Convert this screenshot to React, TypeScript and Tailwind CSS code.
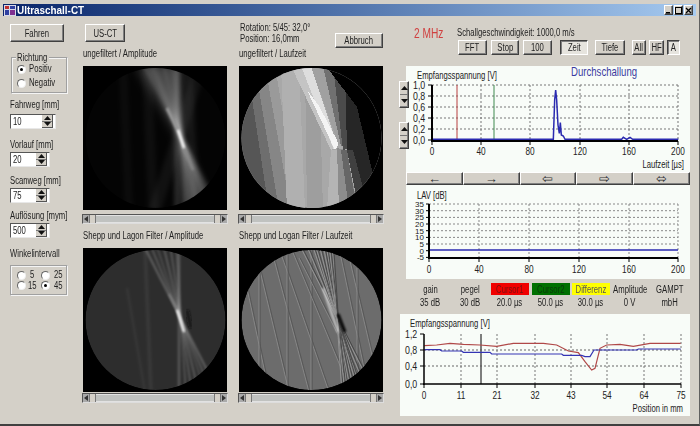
import React from "react";

const raised = "border border-t-white border-l-white border-r-[#404040] border-b-[#404040] shadow-[inset_-1px_-1px_0_#808080] bg-[#d4d0c8]";
const pressed = "border border-t-[#404040] border-l-[#404040] border-r-white border-b-white shadow-[inset_1px_1px_0_#808080] bg-[#e6e4de]";

const L = ({ children }: { children: React.ReactNode }) => <span className="inline-block whitespace-nowrap origin-left scale-x-[.77]">{children}</span>;
const C = ({ children }: { children: React.ReactNode }) => <span className="inline-block whitespace-nowrap origin-center scale-x-[.77]">{children}</span>;

function Btn({ w, h = 15, on, ml = 0, children }: { w: number; h?: number; on?: boolean; ml?: number; children: React.ReactNode }) {
  return (
    <div className={`${on ? pressed : raised} flex items-center justify-center shrink-0 text-[10px] text-[#222]`} style={{ width: w, height: h, marginLeft: ml }}>
      <C>{children}</C>
    </div>
  );
}

function Tri({ down }: { down?: boolean }) {
  return (
    <svg width="7" height="4" viewBox="0 0 7 4">
      <polygon points={down ? "0,0 7,0 3.5,4" : "0,4 7,4 3.5,0"} fill="#111" />
    </svg>
  );
}

function Spin({ value, w }: { value: string; w: number }) {
  return (
    <div className="h-[15px] flex items-center bg-white border border-t-[#555] border-l-[#555] border-r-[#e8e8e8] border-b-[#e8e8e8] pl-[2px]" style={{ width: w }}>
      <span className="flex-1 text-[10px] text-[#222]"><L>{value}</L></span>
      <div className="w-[11px] h-[13px] flex flex-col bg-[#d4d0c8] mr-[2px] border-r border-b border-[#555]">
        <div className="flex-1 flex items-center justify-center border-b border-[#777]"><Tri /></div>
        <div className="flex-1 flex items-center justify-center"><Tri down /></div>
      </div>
    </div>
  );
}

function Radio({ on }: { on?: boolean }) {
  return (
    <span className="w-[9px] h-[9px] rounded-full bg-white border border-t-[#666] border-l-[#666] border-r-[#eee] border-b-[#eee] flex items-center justify-center shrink-0">
      {on && <span className="w-[3px] h-[3px] rounded-full bg-black" />}
    </span>
  );
}

function Scroll() {
  return (
    <div className="w-[146px] -ml-[1px] h-[10px] flex items-stretch bg-[#c8c8c4] border border-t-[#555] border-l-[#555] border-r-[#ddd] border-b-[#ddd]">
      <div className="w-[6px] flex items-center justify-center bg-[#aaa]">
        <svg width="4" height="6"><polygon points="4,0 4,6 0,3" fill="#333" /></svg>
      </div>
      <div className="w-[7px] bg-[#d4d0c8] border-x border-[#777]" />
      <div className="flex-1 bg-[#c0c2c0] border-y border-[#e2e2e2]" />
      <div className="w-[7px] bg-[#d4d0c8] border-x border-[#777]" />
      <div className="w-[6px] flex items-center justify-center bg-[#aaa]">
        <svg width="4" height="6"><polygon points="0,0 0,6 4,3" fill="#333" /></svg>
      </div>
    </div>
  );
}

const fan = [60, 67, 73, 80, 87, 93];
const through = (t: number) => ({ x1: t, y1: -4, x2: 98 + (98 - t) * 1.03, y2: 148 });

function CtA() {
  return (
    <svg width="144" height="144" className="block">
      <defs>
        <clipPath id="ca"><circle cx="72.5" cy="72" r="70" /></clipPath>
        <filter id="fa"><feGaussianBlur stdDeviation="2" /></filter>
        <filter id="fa3"><feGaussianBlur stdDeviation="5" /></filter>
        <filter id="fa2"><feGaussianBlur stdDeviation="1" /></filter>
      </defs>
      <rect width="144" height="144" fill="#000" />
      <g clipPath="url(#ca)">
        <circle cx="72.5" cy="72" r="70" fill="#040404" />
        <g filter="url(#fa3)" fill="#fff">
          <polygon points="52,0 100,0 102,72 94,72" fillOpacity=".16" />
          <polygon points="94,76 102,76 128,144 100,144" fillOpacity=".16" />
        </g>
        <g filter="url(#fa)" stroke="#fff">
          {[[40, 46, .03, 8], [64, 70, .04, 10], [94, 94, .14, 5], [106, 112, .06, 8]].map(([a, b, o, w], i) => (
            <line key={i} x1={a} y1="0" x2={b} y2="144" strokeOpacity={o} strokeWidth={w} />
          ))}
          {fan.map((t, i) => <line key={t} {...through(t)} strokeOpacity={[.2, .28, .2, .26, .22, .2][i]} strokeWidth="3.5" />)}
          <line x1="118" y1="0" x2="72" y2="144" strokeOpacity=".05" strokeWidth="12" />
        </g>
        <g filter="url(#fa2)">
          <line x1="95" y1="64" x2="101" y2="82" stroke="#fff" strokeWidth="2.4" />
          <line x1="84" y1="42" x2="95" y2="64" stroke="#999" strokeWidth="3" />
          <line x1="101" y1="82" x2="110" y2="104" stroke="#888" strokeWidth="2.5" />
        </g>
      </g>
    </svg>
  );
}

function CtC() {
  return (
    <svg width="144" height="144" className="block">
      <defs>
        <clipPath id="cc"><circle cx="72.5" cy="72" r="70" /></clipPath>
        <filter id="fc"><feGaussianBlur stdDeviation="1" /></filter>
        <filter id="fc2"><feGaussianBlur stdDeviation="1.2" /></filter>
      </defs>
      <rect width="144" height="144" fill="#000" />
      <g clipPath="url(#cc)">
        <circle cx="72.5" cy="72" r="70" fill="#2d2d2d" />
        <g filter="url(#fc)" stroke="#fff">
          <line x1="96" y1="0" x2="96" y2="144" strokeOpacity=".2" strokeWidth="2.5" />
          <line x1="62" y1="0" x2="68" y2="144" strokeOpacity=".05" strokeWidth="4" />
          <line x1="44" y1="40" x2="62" y2="144" strokeOpacity=".04" strokeWidth="3" />
          {fan.map((t, i) => <line key={t} {...through(t)} strokeOpacity={[.26, .2, .15, .22, .2, .18][i]} strokeWidth="2" />)}
        </g>
        <line x1="104" y1="62" x2="108" y2="80" stroke="#111" strokeOpacity=".7" strokeWidth="4" filter="url(#fc2)" />
        <g filter="url(#fc)">
          <line x1="94" y1="62" x2="101" y2="84" stroke="#fff" strokeWidth="2.2" />
          <line x1="86" y1="46" x2="94" y2="62" stroke="#888" strokeWidth="1.6" />
        </g>
      </g>
    </svg>
  );
}

function CtB() {
  const polys: [string, string][] = [
    ["0,0 36,0 60,144 0,144", "#9a9a9a"],
    ["0,0 26,0 52,144 0,144", "#868686"],
    ["0,0 16,0 40,144 0,144", "#6e6e6e"],
    ["0,0 8,0 30,144 0,144", "#565656"],
    ["42,0 60,0 66,144 48,144", "#b0b0b0"],
    ["66,0 80,0 84,144 68,144", "#9e9e9e"],
    ["52,0 68,0 98,78 92,84", "#c4c4c4"],
    ["62,0 72,0 98,78 95,84", "#dedede"],
    ["68,24 80,40 100,78 96,84", "#f4f4f4"],
    ["72,0 84,0 106,60 100,80", "#a0a0a0"],
    ["84,0 94,0 112,70 102,80", "#707070"],
    ["94,0 106,0 122,80 104,84", "#4c4c4c"],
    ["106,0 144,0 144,144 128,144 108,84", "#262626"],
    ["90,4 118,41 133,104 144,144 144,0", "#000000"],
    ["92,84 100,84 102,144 88,144", "#b4b4b4"],
    ["98,82 106,84 120,144 100,144", "#8c8c8c"],
    ["102,84 108,84 118,144 110,144", "#666666"],
    ["108,84 114,84 130,144 120,144", "#404040"],
  ];
  return (
    <svg width="144" height="144" className="block" shapeRendering="crispEdges">
      <defs>
        <clipPath id="cb"><circle cx="72.5" cy="72" r="70" /></clipPath>
        <filter id="fb"><feGaussianBlur stdDeviation=".6" /></filter>
      </defs>
      <rect width="144" height="144" fill="#000" />
      <g clipPath="url(#cb)">
        <rect width="144" height="144" fill="#a8a8a8" />
        <g filter="url(#fb)">{polys.map(([p, f], i) => <polygon key={i} points={p} fill={f} />)}</g>
      </g>
    </svg>
  );
}

function CtD() {
  const light: number[][] = [
    [32, 0, 70, 144], [18, 10, 50, 144], [40, 0, 90, 144], [8, 40, 30, 144], [48, 0, 48, 144], [72, 0, 72, 144], [20, 20, 20, 130],
    [100, 0, 130, 144], [108, 0, 136, 120], [118, 20, 118, 130], [60, 10, 128, 144], [52, 0, 112, 144],
  ];
  return (
    <svg width="144" height="144" className="block">
      <defs>
        <clipPath id="cd"><circle cx="72.5" cy="72" r="70" /></clipPath>
        <filter id="fd"><feGaussianBlur stdDeviation=".8" /></filter>
        <filter id="fd2"><feGaussianBlur stdDeviation=".45" /></filter>
      </defs>
      <rect width="144" height="144" fill="#000" />
      <g clipPath="url(#cd)">
        <circle cx="72.5" cy="72" r="70" fill="#6c6c6c" />
        <g strokeWidth="1" filter="url(#fd2)">
          {light.map(([a, b, c, d], i) => (
            <g key={i}>
              <line x1={a} y1={b} x2={c} y2={d} stroke="#868686" />
              <line x1={a + 1.2} y1={b} x2={c + 1.2} y2={d} stroke="#585858" />
            </g>
          ))}
          {fan.concat([76, 84, 90]).map((t) => {
            const l = through(t);
            return (
              <g key={t}>
                <line {...l} stroke="#949494" />
                <line x1={l.x1 + 1.5} y1={l.y1} x2={l.x2 + 1.5} y2={l.y2} stroke="#484848" />
              </g>
            );
          })}
        </g>
        <g filter="url(#fd)">
          <line x1="84" y1="40" x2="99" y2="84" stroke="#d8d8d8" strokeWidth="2" />
          <line x1="99" y1="66" x2="106" y2="84" stroke="#000" strokeWidth="3" />
        </g>
      </g>
    </svg>
  );
}

function Cell({ label, mt, sm, children }: { label: string; mt: number; sm: number; children: React.ReactNode }) {
  return (
    <div className="w-[144px] flex flex-col" style={{ marginTop: mt }}>
      <div className="h-[12px] leading-[12px] text-[10px] text-[#222] mb-[6px]"><L>{label}</L></div>
      {children}
      <div style={{ marginTop: sm }}><Scroll /></div>
    </div>
  );
}

const T = ({ x, y, a = "middle", c = "#222", s = 10, k = 0.77, children }: { x: number; y: number; a?: "start" | "middle" | "end"; c?: string; s?: number; k?: number; children: React.ReactNode }) => (
  <text transform={`translate(${x} ${y}) scale(${k} 1)`} textAnchor={a} fontSize={s} fill={c} fontFamily="Liberation Sans, Arial, sans-serif">{children}</text>
);

function Chart1() {
  const X = [26, 75, 124, 174, 223, 272];
  const Y = [19, 30, 41, 52, 63, 74];
  const pulse: number[][] = [[95, 418], [460, 418], [464, 300], [467, 270], [470, 300], [474, 375], [478, 400], [481, 368], [484, 405], [490, 408], [495, 418], [665, 418], [670, 412], [680, 418], [690, 412], [698, 418], [835, 418]];
  return (
    <svg width="284" height="106" className="block">
      {Y.slice(0, 5).map((y) => <line key={y} x1="26" x2="272" y1={y} y2={y} stroke="#777" strokeDasharray="2 2" />)}
      {X.slice(1).map((x) => <line key={x} x1={x} x2={x} y1="19" y2="74" stroke="#777" strokeDasharray="2 2" />)}
      <line x1="51" x2="51" y1="19" y2="74" stroke="#b84040" />
      <line x1="88" x2="88" y1="19" y2="74" stroke="#3f8a4f" />
      <polyline points={pulse.map(([x, y]) => `${x / 3 - 6},${y / 3 - 66}`).join(" ")} fill="none" stroke="#2a2ab0" strokeWidth="1.5" />
      <line x1="26" x2="26" y1="19" y2="76" stroke="#000" strokeWidth="2" />
      <line x1="25" x2="272" y1="75" y2="75" stroke="#000" strokeWidth="2" />
      {Y.map((y) => <line key={y} x1="22" x2="26" y1={y} y2={y} stroke="#000" />)}
      {X.map((x) => <line key={x} x1={x} x2={x} y1="75" y2="79" stroke="#000" />)}
      {["1,0", "0,8", "0,6", "0,4", "0,2", "0,0"].map((l, i) => <T key={l} x={7} y={Y[i] + 4} a="start" s={11} k={.8}>{l}</T>)}
      {["0", "40", "80", "120", "160", "200"].map((l, i) => <T key={l} x={X[i]} y={89} s={11} k={.75}>{l}</T>)}
      <T x={11} y={13} a="start">Empfangsspannung [V]</T>
      <T x={165} y={10} a="start" c="#3a3aa0" s={12} k={.8}>Durchschallung</T>
      <T x={278} y={102} a="end">Laufzeit [µs]</T>
    </svg>
  );
}

function Chart2() {
  const X = [23, 73, 123, 173, 223, 272];
  const Y = [19, 25.7, 32.4, 39, 45.7, 52.4, 59, 65.7, 72.4];
  const Lb = ["35", "30", "25", "20", "15", "10", "5", "0", "-5"];
  return (
    <svg width="284" height="94" className="block">
      {Y.slice(0, 7).map((y) => <line key={y} x1="23" x2="272" y1={y} y2={y} stroke="#888" strokeDasharray="2 2" />)}
      {X.slice(1).map((x) => <line key={x} x1={x} x2={x} y1="19" y2="73" stroke="#888" strokeDasharray="2 2" />)}
      <line x1="23" x2="272" y1="65" y2="65" stroke="#2a2ab0" strokeWidth="1.3" />
      <line x1="23" x2="23" y1="19" y2="74" stroke="#000" strokeWidth="2" />
      <line x1="22" x2="272" y1="73" y2="73" stroke="#000" strokeWidth="2" />
      {Y.map((y) => <line key={y} x1="20" x2="23" y1={y} y2={y} stroke="#000" />)}
      {X.map((x) => <line key={x} x1={x} x2={x} y1="73" y2="77" stroke="#000" />)}
      {Lb.map((l, i) => <T key={l} x={18} y={Y[i] + 3} a="end" s={8} k={1}>{l}</T>)}
      {["0", "40", "80", "120", "160", "200"].map((l, i) => <T key={l} x={X[i]} y={88} s={11} k={.75}>{l}</T>)}
      <T x={11} y={14} a="start">LAV [dB]</T>
    </svg>
  );
}

function Chart3() {
  const X = [24, 61, 97, 135, 171, 207, 244, 281];
  const Lb = ["0", "11", "21", "32", "43", "54", "64", "75"];
  const Y = [20, 36, 52, 70];
  const red: number[][] = [[73, 122], [110, 120], [150, 115], [190, 118], [240, 120], [290, 124], [340, 115], [430, 115], [470, 120], [505, 138], [535, 143], [555, 170], [575, 195], [585, 190], [600, 130], [620, 120], [660, 118], [700, 124], [750, 115], [842, 115]];
  const blue: number[][] = [[73, 134], [120, 134], [125, 138], [185, 138], [190, 142], [270, 142], [275, 147], [485, 147], [490, 151], [545, 151], [555, 155], [570, 155], [582, 135], [710, 135], [715, 132], [842, 132]];
  const pts = (a: number[][]) => a.map(([x, y]) => `${x / 3},${y / 3 - 9}`).join(" ");
  return (
    <svg width="290" height="102" className="block">
      {Y.slice(1, 3).map((y) => <line key={y} x1="24" x2="281" y1={y} y2={y} stroke="#666" strokeDasharray="2 2" />)}
      {X.slice(1).map((x) => <line key={x} x1={x} x2={x} y1="20" y2="70" stroke="#777" strokeDasharray="2 2" />)}
      <line x1="81" x2="81" y1="20" y2="70" stroke="#555" strokeWidth="1.5" />
      <polyline points={pts(red)} fill="none" stroke="#b04848" strokeWidth="1.2" />
      <polyline points={pts(blue)} fill="none" stroke="#3434b4" strokeWidth="1.2" />
      <line x1="24" x2="24" y1="20" y2="71" stroke="#000" strokeWidth="1.5" />
      <line x1="23" x2="281" y1="70" y2="70" stroke="#000" strokeWidth="1.5" />
      {Y.map((y) => <line key={y} x1="20" x2="24" y1={y} y2={y} stroke="#000" />)}
      {X.map((x) => <line key={x} x1={x} x2={x} y1="70" y2="74" stroke="#000" />)}
      {["1,2", "0,8", "0,4", "0,0"].map((l, i) => <T key={l} x={5} y={Y[i] + 4} a="start" s={11} k={.8}>{l}</T>)}
      {Lb.map((l, i) => <T key={l} x={X[i]} y={85} s={11} k={.75}>{l}</T>)}
      <T x={10} y={13} a="start">Empfangsspannung [V]</T>
      <T x={283} y={98} a="end">Position in mm</T>
    </svg>
  );
}

function ArrowBtn({ children }: { children: React.ReactNode }) {
  return <div className={`${raised} flex-1 h-[13px] flex items-center justify-center text-[13px] leading-none text-[#333]`}>{children}</div>;
}

function Stat({ w, a, b, color, ml = 0 }: { w: number; a: string; b: string; color?: string; ml?: number }) {
  return (
    <div className="flex flex-col items-center shrink-0" style={{ width: w, marginLeft: ml }}>
      <div className={`h-[12px] w-full flex items-center justify-center text-[10px] ${color ?? "text-[#222]"}`}><C>{a}</C></div>
      <div className="h-[13px] mt-[1px] flex items-center text-[10px] text-[#222]"><C>{b}</C></div>
    </div>
  );
}

function SpinPair() {
  return (
    <div className={`${raised} w-[10px] h-[27px] flex flex-col`}>
      <div className="flex-1 flex items-center justify-center border-b border-[#777]"><Tri /></div>
      <div className="flex-1 flex items-center justify-center"><Tri down /></div>
    </div>
  );
}

export default function App() {
  const label = "h-[12px] leading-[12px] text-[10px]";
  return (
    <div className="w-[700px] h-[426px] bg-[#d4d0c8] flex flex-col overflow-hidden border-b-2 border-b-[#404040] border-r border-r-[#606060] text-[#222]" style={{ fontFamily: '"Liberation Sans", Arial, sans-serif' }}>
      <div className="mt-[4px] mx-[3px] h-[12px] flex items-center bg-gradient-to-r from-[#0a246a] to-[#a6caf0] shrink-0">
        <svg width="12" height="11" className="ml-[1px] shrink-0">
          <rect width="12" height="11" fill="#d8d8e8" />
          <rect x="1" y="1" width="4" height="3" fill="#c03030" />
          <rect x="6" y="1" width="5" height="3" fill="#3040a0" />
          <rect x="1" y="5" width="4" height="5" fill="#3040a0" />
          <rect x="6" y="5" width="5" height="5" fill="#803090" />
        </svg>
        <span className="ml-[1px] text-[11px] font-bold text-white leading-none flex-1"><span className="inline-block origin-left scale-x-[.9] whitespace-nowrap">Ultraschall-CT</span></span>
        <div className="flex mr-[3px] gap-[1px]">
          {["min", "max", "close"].map((k, i) => (
            <div key={k} className={`${raised} w-[9px] h-[10px] flex items-center justify-center`}>
              <svg width="7" height="7">
                {i === 0 && <rect x="1" y="5" width="4" height="1.5" fill="#000" />}
                {i === 1 && <rect x="0.5" y="0.5" width="6" height="6" fill="none" stroke="#000" />}
                {i === 2 && <path d="M1 1 6 6M6 1 1 6" stroke="#000" strokeWidth="1.3" />}
              </svg>
            </div>
          ))}
        </div>
      </div>

      <div className="flex-1 flex min-h-0">
        <div className="w-[83px] pl-[10px] flex flex-col shrink-0">
          <div className="mt-[8px]"><Btn w={54} h={18}>Fahren</Btn></div>
          <div className="relative mt-[15px] ml-[1px] w-[57px] h-[37px] border border-t-[#a0a0a0] border-l-[#a0a0a0] border-r-[#f4f4f4] border-b-[#f4f4f4] shadow-[inset_-1px_-1px_0_#a0a0a0,inset_1px_1px_0_#f4f4f4] flex flex-col pl-[5px] pt-[6px] gap-[4px]">
            <span className="absolute -top-[6px] left-[4px] w-[33px] overflow-hidden bg-[#d4d0c8] text-[10px] leading-[12px] px-[1px]"><L>Richtung</L></span>
            <div className="flex items-center gap-[3px] text-[10px] leading-[10px]"><Radio on /><L>Positiv</L></div>
            <div className="flex items-center gap-[3px] text-[10px] leading-[10px]"><Radio /><L>Negativ</L></div>
          </div>
          <div className={`mt-[5px] ${label}`}><L>Fahrweg [mm]</L></div>
          <div className="mt-[3px]"><Spin value="10" w={46} /></div>
          <div className={`mt-[10px] ${label}`}><L>Vorlauf [mm]</L></div>
          <div className="mt-[1px]"><Spin value="20" w={40} /></div>
          <div className={`mt-[8px] ${label}`}><L>Scanweg [mm]</L></div>
          <div className="mt-[1px]"><Spin value="75" w={40} /></div>
          <div className={`mt-[7px] ${label}`}><L>Auflösung [mym]</L></div>
          <div className="mt-[1px]"><Spin value="500" w={40} /></div>
          <div className={`mt-[10px] ${label}`}><L>Winkelintervall</L></div>
          <div className="mt-[5px] w-[58px] h-[31px] border border-t-[#a0a0a0] border-l-[#a0a0a0] border-r-[#f4f4f4] border-b-[#f4f4f4] shadow-[inset_-1px_-1px_0_#a0a0a0,inset_1px_1px_0_#f4f4f4] grid grid-cols-[24px_24px] pl-[6px] py-[4px] text-[10px] leading-[10px]">
            <div className="flex items-center gap-[4px]"><Radio /><L>5</L></div>
            <div className="flex items-center gap-[4px]"><Radio /><L>25</L></div>
            <div className="flex items-center gap-[2px]"><Radio /><L>15</L></div>
            <div className="flex items-center gap-[4px]"><Radio on /><L>45</L></div>
          </div>
        </div>

        <div className="w-[316px] shrink-0 flex flex-col">
          <div className="flex h-[32px]">
            <div className="ml-[2px] mt-[8px]"><Btn w={40} h={18}>US-CT</Btn></div>
            <div className="ml-[115px] mt-[6px] text-[10px] leading-[11px] w-[95px]">
              <div><L>Rotation: 5/45: 32,0°</L></div>
              <div><L>Position: 16,0mm</L></div>
            </div>
            <div className="mt-[17px]"><Btn w={48} h={15}>Abbruch</Btn></div>
          </div>
          <div className="grid grid-cols-[144px_144px] gap-x-[12px]">
            <Cell label="ungefiltert / Amplitude" mt={0} sm={4}><CtA /></Cell>
            <Cell label="ungefiltert / Laufzeit" mt={0} sm={4}><CtB /></Cell>
            <Cell label="Shepp und Lagon Filter / Amplitude" mt={6} sm={1}><CtC /></Cell>
            <Cell label="Shepp und Logan Filter / Laufzeit" mt={6} sm={1}><CtD /></Cell>
          </div>
        </div>

        <div className="flex-1 flex flex-col min-w-0">
          <div className="flex items-center h-[14px] mt-[9px] pl-[15px]">
            <span className="w-[43px] text-[15px] leading-none text-[#d04040]"><span className="inline-block origin-left scale-x-[.68] whitespace-nowrap">2 MHz</span></span>
            <span className="text-[10px]"><L>Schallgeschwindigkeit: 1000,0 m/s</L></span>
          </div>
          <div className="flex mt-[1px] h-[15px] pl-[59px]">
            <Btn w={29}>FFT</Btn>
            <Btn w={28} ml={4}>Stop</Btn>
            <Btn w={29} ml={4}>100</Btn>
            <Btn w={28} ml={8} on>Zeit</Btn>
            <Btn w={30} ml={7}>Tiefe</Btn>
            <Btn w={14} ml={7}>All</Btn>
            <Btn w={15} ml={3}>HF</Btn>
            <Btn w={13} ml={3} on>A</Btn>
          </div>
          <div className="relative mt-[11px] ml-[7px] w-[284px] h-[106px] bg-[#f8fcf8]">
            <Chart1 />
            <div className="absolute -left-[7px] top-[15px]"><SpinPair /></div>
            <div className="absolute -left-[7px] top-[56px]"><SpinPair /></div>
          </div>
          <div className="ml-[7px] w-[284px] flex h-[13px]">
            <ArrowBtn>←</ArrowBtn><ArrowBtn>→</ArrowBtn><ArrowBtn>⇦</ArrowBtn><ArrowBtn>⇨</ArrowBtn><ArrowBtn>⬄</ArrowBtn>
          </div>
          <div className="ml-[7px] w-[284px] h-[94px] bg-[#f8fcf8]"><Chart2 /></div>
          <div className="flex mt-[4px] ml-[11px] h-[27px]">
            <Stat w={40} a="gain" b="35 dB" />
            <Stat w={40} a="pegel" b="30 dB" />
            <Stat w={38} ml={1} a="Cursor1" b="20.0 µs" color="bg-[#f00000] text-[#7a1010]" />
            <Stat w={38} ml={3} a="Cursor2" b="50.0 µs" color="bg-[#007000] text-[#0a3a0a]" />
            <Stat w={38} ml={2} a="Differenz" b="30.0 µs" color="bg-[#ffff00] text-[#555]" />
            <Stat w={40} a="Amplitude" b="0 V" />
            <Stat w={40} a="GAMPT" b="mbH" />
          </div>
          <div className="mt-[4px] ml-[1px] w-[290px] h-[102px] bg-[#f8fcf8]"><Chart3 /></div>
        </div>
      </div>
    </div>
  );
}
